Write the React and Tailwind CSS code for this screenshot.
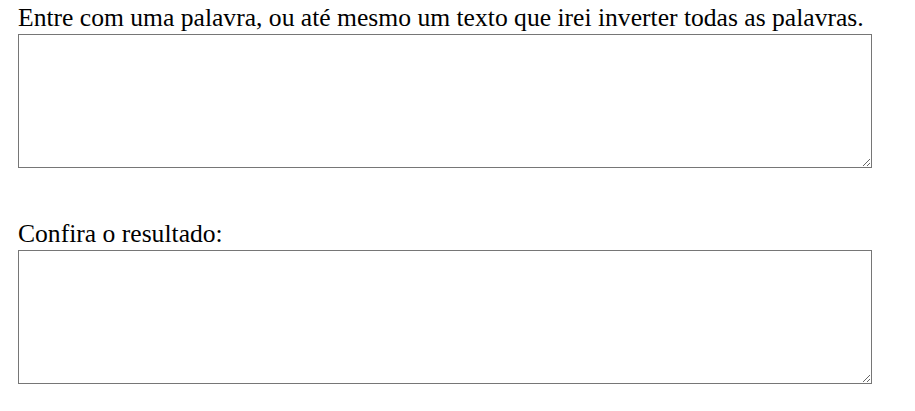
export default function App() {
  return (
    <div className="min-h-screen bg-white pt-[4px] pl-[18px] font-['Liberation_Serif',serif] text-black">
      <label className="block text-[25.6px] leading-[28px]">
        Entre com uma palavra, ou até mesmo um texto que irei inverter todas as palavras.
      </label>
      <textarea className="mt-[2px] block h-[134px] w-[854px] border border-[#767676] bg-white p-[2px] text-[13px]" />
      <label className="mt-[52px] block text-[25.6px] leading-[28px]">Confira o resultado:</label>
      <textarea className="mt-[2px] block h-[134px] w-[854px] border border-[#767676] bg-white p-[2px] text-[13px]" />
    </div>
  );
}
